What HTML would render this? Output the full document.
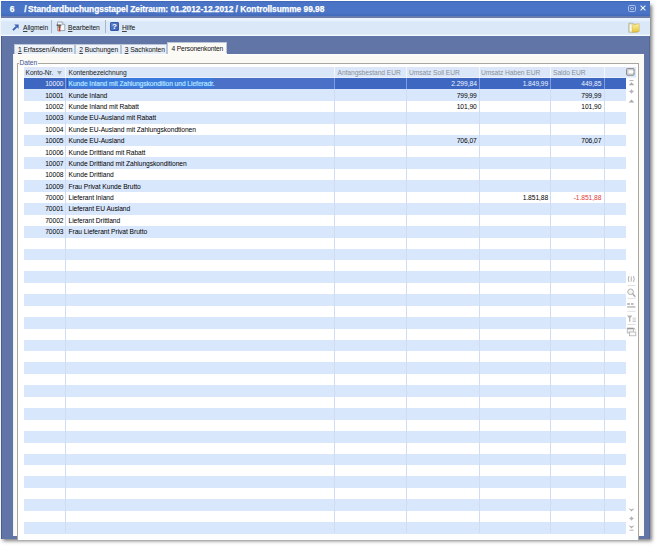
<!DOCTYPE html><html><head><meta charset="utf-8"><style>
*{margin:0;padding:0;box-sizing:border-box}
html,body{width:658px;height:548px;overflow:hidden;background:#fff}
body{position:relative;font-family:"Liberation Sans",sans-serif;font-size:6.7px;letter-spacing:-0.06px;color:#000}
.a{position:absolute}
.t{position:absolute;white-space:nowrap;line-height:6.9px}
.r{text-align:right}
u{text-decoration-thickness:0.6px;text-underline-offset:1px;text-decoration-color:#444}
</style></head><body><div class="a" style="left:1.3px;top:3px;width:648.4px;height:536.4px;background:#868686;box-shadow:2px 2px 3.5px 0px rgba(0,0,0,0.5)"></div><div class="a" style="left:1.2px;top:1.3px;width:648.5px;height:538px;background:#6275a7;border-left:0.8px solid #4d5d92;border-right:0.8px solid #56669a"></div><div class="a" style="left:1.3px;top:1.3px;width:648.4px;height:14.5px;background:linear-gradient(#4066b6,#4a74c6 12%,#4a74c6 80%,#4369b9)"></div><div class="t" style="left:9.8px;top:5.4px;line-height:8.4px;font-size:8.4px;letter-spacing:0;font-weight:bold;color:#fff;-webkit-text-stroke:0.25px #fff">6</div><div class="t" style="left:24.3px;top:5.4px;line-height:8.4px;font-size:8.4px;letter-spacing:-0.03px;font-weight:bold;color:#fff;-webkit-text-stroke:0.25px #fff">/<span style="margin-left:1.5px"></span>Standardbuchungsstapel Zeitraum: 01.2012-12.2012 / Kontrollsumme 99.98</div><div class="a" style="left:628.2px;top:5.3px;width:7.6px;height:6.8px;border:1.2px solid #aac0ea;border-radius:1.8px"></div><div class="a" style="left:630.3px;top:7.2px;width:3.4px;height:3px;border:0.9px solid #9fb5e2;border-radius:1px"></div><svg class="a" style="left:639.8px;top:5.2px" width="6" height="6" viewBox="0 0 6 6"><path d="M.6 .6L5.4 5.4M5.4 .6L.6 5.4" stroke="#f4f8ff" stroke-width="1.05"/></svg><div class="a" style="left:1.3px;top:15.5px;width:648.4px;height:2.1px;background:#6a7cab"></div><div class="a" style="left:1.3px;top:17.6px;width:648.4px;height:18.6px;background:linear-gradient(#eaf5ff 0,#e6f1fd 14%,#dae8f8 22%,#dae8f8 90%,#f4faff 95%,#f4faff 100%)"></div><svg class="a" style="left:11.8px;top:23.6px" width="7" height="7" viewBox="0 0 7 7"><path d="M1 6.2L4.6 2.6" stroke="#3a5fb2" stroke-width="1.9"/><path d="M2.2 .4H6.6V4.8Z" fill="#3a5fb2"/></svg><div class="t" style="left:23px;top:25.2px;color:#111"><u>A</u>llgmein</div><div class="a" style="left:51px;top:20px;width:1px;height:13px;background:#a9b5c8"></div><svg class="a" style="left:56px;top:21px" width="10" height="11" viewBox="0 0 10 11"><path d="M1.5 1H6.2L8.8 3.6V9.6H1.5Z" fill="#f6f8fb" stroke="#8d96a3" stroke-width=".8"/><path d="M6.2 1V3.6H8.8" fill="#c9d2de" stroke="#8d96a3" stroke-width=".6"/><path d="M.6 4.2H5.4" stroke="#4a4a4a" stroke-width="1.3"/><path d="M3.5 4.8V10.4" stroke="#c8431a" stroke-width="1.8"/><path d="M3.5 4.8V7" stroke="#7a5a4a" stroke-width="1.8"/></svg><div class="t" style="left:68px;top:25.2px;color:#111"><u>B</u>earbeiten</div><div class="a" style="left:104.5px;top:20px;width:1px;height:13px;background:#a9b5c8"></div><div class="a" style="left:110px;top:22.1px;width:8.9px;height:8.9px;background:linear-gradient(135deg,#5a7fd0,#3a5fb4);border:0.6px solid #3558a8;border-radius:1px;color:#fff;font-weight:bold;font-size:8px;letter-spacing:0;line-height:8.4px;text-align:center">?</div><div class="t" style="left:122px;top:25.2px;color:#111"><u>H</u>ilfe</div><svg class="a" style="left:628px;top:21.5px" width="12" height="11" viewBox="0 0 12 11"><defs><linearGradient id="fy" x1="0" y1="0" x2="0" y2="1"><stop offset="0" stop-color="#fbf2a0"/><stop offset="1" stop-color="#e6c43a"/></linearGradient></defs><path d="M.8 1.2H5L6 2.2H9.5V10.2H.8Z" fill="#e9e3c0" stroke="#a9a58e" stroke-width=".7"/><path d="M2.2 3H8V9.5H2.2Z" fill="#fffef5"/><path d="M4 3.2L11.2 1.6V9.4L4 10.4Z" fill="url(#fy)" stroke="#c9b04a" stroke-width=".5"/></svg><div class="a" style="left:14px;top:44px;width:61.3px;height:10.5px;background:linear-gradient(#f2f6fc,#e3ebf6);border:1px solid #b9c6d8;border-bottom:none"></div><div class="t" style="left:18px;top:47px;color:#111"><u>1</u> Erfassen/Ändern</div><div class="a" style="left:75.3px;top:44px;width:45.4px;height:10.5px;background:linear-gradient(#f2f6fc,#e3ebf6);border:1px solid #b9c6d8;border-bottom:none"></div><div class="t" style="left:79.3px;top:47px;color:#111"><u>2</u> Buchungen</div><div class="a" style="left:120.7px;top:44px;width:46.7px;height:10.5px;background:linear-gradient(#f2f6fc,#e3ebf6);border:1px solid #b9c6d8;border-bottom:none"></div><div class="t" style="left:124.7px;top:47px;color:#111"><u>3</u> Sachkonten</div><div class="a" style="left:167.4px;top:42.3px;width:60px;height:12.5px;background:#fbfaf5;border:1px solid #b9c6d8;border-bottom:none"></div><div class="t" style="left:171.6px;top:45.9px;letter-spacing:-0.17px;color:#111">4 Personenkonten</div><div class="a" style="left:13px;top:54.2px;width:631px;height:482.3px;background:#fbfaf5;border-left:1.6px solid #eef3fb;border-top:1px solid #ffffff"></div><div class="a" style="left:167.9px;top:53px;width:59px;height:2px;background:#fbfaf5"></div><div class="a" style="left:17.2px;top:63.3px;width:621.5px;height:476.3px;border:0.9px solid #a9a7a0;border-bottom:none;background:#fff"></div><div class="t" style="left:18.6px;top:59.2px;line-height:7px;padding:0 1px;background:#fbfaf5;color:#41579c">Daten</div><div class="a" style="left:24px;top:67px;width:611.6px;height:10.7px;background:linear-gradient(#dee6fa,#d9e8f8 55%,#dce7f8 88%,#f2f8ff 100%)"></div><div class="t" style="left:25.5px;top:69.6px;color:#222">Konto-Nr.</div><div class="t" style="left:68.5px;top:69.6px;color:#222">Kontenbezeichnung</div><div class="t" style="left:337.5px;top:69.6px;color:#8a8f98">Anfangsbestand EUR</div><div class="t" style="left:409px;top:69.6px;color:#8a8f98">Umsatz Soll EUR</div><div class="t" style="left:481px;top:69.6px;color:#8a8f98">Umsatz Haben EUR</div><div class="t" style="left:553px;top:69.6px;color:#8a8f98">Saldo EUR</div><svg class="a" style="left:57px;top:70.5px" width="5" height="4" viewBox="0 0 5 4"><path d="M0 0H5L2.5 4Z" fill="#9aa0a8"/></svg><div class="a" style="left:65.3px;top:67px;width:1px;height:10.7px;background:#f4f7fc"></div><div class="a" style="left:334px;top:67px;width:1px;height:10.7px;background:#f4f7fc"></div><div class="a" style="left:406.2px;top:67px;width:1px;height:10.7px;background:#f4f7fc"></div><div class="a" style="left:478.5px;top:67px;width:1px;height:10.7px;background:#f4f7fc"></div><div class="a" style="left:550.3px;top:67px;width:1px;height:10.7px;background:#f4f7fc"></div><div class="a" style="left:603.7px;top:67px;width:1px;height:10.7px;background:#f4f7fc"></div><div class="a" style="left:24px;top:77.7px;width:602px;height:11.39px;background:#3e67c2"></div><div class="a" style="left:24px;top:89.09px;width:602px;height:11.79px;background:#d9e7fc"></div><div class="a" style="left:24px;top:111.87px;width:602px;height:11.79px;background:#d9e7fc"></div><div class="a" style="left:24px;top:134.65px;width:602px;height:11.79px;background:#d9e7fc"></div><div class="a" style="left:24px;top:157.43px;width:602px;height:11.79px;background:#d9e7fc"></div><div class="a" style="left:24px;top:180.21px;width:602px;height:11.79px;background:#d9e7fc"></div><div class="a" style="left:24px;top:202.99px;width:602px;height:11.79px;background:#d9e7fc"></div><div class="a" style="left:24px;top:225.77px;width:602px;height:11.79px;background:#d9e7fc"></div><div class="a" style="left:24px;top:248.55px;width:602px;height:11.79px;background:#d9e7fc"></div><div class="a" style="left:24px;top:271.33px;width:602px;height:11.79px;background:#d9e7fc"></div><div class="a" style="left:24px;top:294.11px;width:602px;height:11.79px;background:#d9e7fc"></div><div class="a" style="left:24px;top:316.89px;width:602px;height:11.79px;background:#d9e7fc"></div><div class="a" style="left:24px;top:339.67px;width:602px;height:11.79px;background:#d9e7fc"></div><div class="a" style="left:24px;top:362.45px;width:602px;height:11.79px;background:#d9e7fc"></div><div class="a" style="left:24px;top:385.23px;width:602px;height:11.79px;background:#d9e7fc"></div><div class="a" style="left:24px;top:408.01px;width:602px;height:11.79px;background:#d9e7fc"></div><div class="a" style="left:24px;top:430.79px;width:602px;height:11.79px;background:#d9e7fc"></div><div class="a" style="left:24px;top:453.57px;width:602px;height:11.79px;background:#d9e7fc"></div><div class="a" style="left:24px;top:476.35px;width:602px;height:11.79px;background:#d9e7fc"></div><div class="a" style="left:24px;top:499.13px;width:602px;height:11.79px;background:#d9e7fc"></div><div class="a" style="left:24px;top:521.91px;width:602px;height:11.79px;background:#d9e7fc"></div><div class="a" style="left:65.3px;top:77.7px;width:0.7px;height:455.6px;background:#cfdcf1"></div><div class="a" style="left:334px;top:77.7px;width:0.7px;height:455.6px;background:#cfdcf1"></div><div class="a" style="left:406.2px;top:77.7px;width:0.7px;height:455.6px;background:#cfdcf1"></div><div class="a" style="left:478.5px;top:77.7px;width:0.7px;height:455.6px;background:#cfdcf1"></div><div class="a" style="left:550.3px;top:77.7px;width:0.7px;height:455.6px;background:#cfdcf1"></div><div class="a" style="left:603.7px;top:77.7px;width:0.7px;height:455.6px;background:#cfdcf1"></div><div class="a" style="left:66px;top:77.7px;width:268.1px;height:11.39px;background:#4a70c8"></div><div class="a" style="left:66.6px;top:78.0px;width:146.6px;height:10.49px;background:#3a7adc;border-left:0.8px solid #2c58b4"></div><div class="a" style="left:65.3px;top:77.7px;width:0.8px;height:11.39px;background:#7c9de0"></div><div class="a" style="left:334px;top:77.7px;width:0.8px;height:11.39px;background:#7c9de0"></div><div class="a" style="left:406.2px;top:77.7px;width:0.8px;height:11.39px;background:#7c9de0"></div><div class="a" style="left:478.5px;top:77.7px;width:0.8px;height:11.39px;background:#7c9de0"></div><div class="a" style="left:550.3px;top:77.7px;width:0.8px;height:11.39px;background:#7c9de0"></div><div class="a" style="left:603.7px;top:77.7px;width:0.8px;height:11.39px;background:#7c9de0"></div><div class="t r" style="left:24px;width:39.5px;top:81.2px;color:#eef4ff">10000</div><div class="t" style="left:68.5px;top:81.2px;color:#b8e2ff;-webkit-text-stroke:0.2px #b8e2ff">Kunde Inland mit Zahlungskondition und Lieferadr.</div><div class="t r" style="left:416.8px;width:60px;top:81.2px;color:#eef4ff">2.299,84</div><div class="t r" style="left:488.2px;width:60px;top:81.2px;color:#eef4ff">1.849,99</div><div class="t r" style="left:541.4px;width:60px;top:81.2px;color:#eef4ff">449,85</div><div class="t r" style="left:24px;width:39.5px;top:92.59px;color:#000">10001</div><div class="t" style="left:68.5px;top:92.59px;color:#000">Kunde Inland</div><div class="t r" style="left:416.8px;width:60px;top:92.59px;color:#000">799,99</div><div class="t r" style="left:541.4px;width:60px;top:92.59px;color:#000">799,99</div><div class="t r" style="left:24px;width:39.5px;top:103.98px;color:#000">10002</div><div class="t" style="left:68.5px;top:103.98px;color:#000">Kunde Inland mit Rabatt</div><div class="t r" style="left:416.8px;width:60px;top:103.98px;color:#000">101,90</div><div class="t r" style="left:541.4px;width:60px;top:103.98px;color:#000">101,90</div><div class="t r" style="left:24px;width:39.5px;top:115.37px;color:#000">10003</div><div class="t" style="left:68.5px;top:115.37px;color:#000">Kunde EU-Ausland mit Rabatt</div><div class="t r" style="left:24px;width:39.5px;top:126.76px;color:#000">10004</div><div class="t" style="left:68.5px;top:126.76px;color:#000">Kunde EU-Ausland mit Zahlungskondtionen</div><div class="t r" style="left:24px;width:39.5px;top:138.15px;color:#000">10005</div><div class="t" style="left:68.5px;top:138.15px;color:#000">Kunde EU-Ausland</div><div class="t r" style="left:416.8px;width:60px;top:138.15px;color:#000">706,07</div><div class="t r" style="left:541.4px;width:60px;top:138.15px;color:#000">706,07</div><div class="t r" style="left:24px;width:39.5px;top:149.54px;color:#000">10006</div><div class="t" style="left:68.5px;top:149.54px;color:#000">Kunde Drittland mit Rabatt</div><div class="t r" style="left:24px;width:39.5px;top:160.93px;color:#000">10007</div><div class="t" style="left:68.5px;top:160.93px;color:#000">Kunde Drittland mit Zahlungskonditionen</div><div class="t r" style="left:24px;width:39.5px;top:172.32px;color:#000">10008</div><div class="t" style="left:68.5px;top:172.32px;color:#000">Kunde Drittland</div><div class="t r" style="left:24px;width:39.5px;top:183.71px;color:#000">10009</div><div class="t" style="left:68.5px;top:183.71px;color:#000">Frau Privat Kunde Brutto</div><div class="t r" style="left:24px;width:39.5px;top:195.1px;color:#000">70000</div><div class="t" style="left:68.5px;top:195.1px;color:#000">Lieferant Inland</div><div class="t r" style="left:488.2px;width:60px;top:195.1px;color:#000">1.851,88</div><div class="t r" style="left:541.4px;width:60px;top:195.1px;color:#e0383a">-1.851,88</div><div class="t r" style="left:24px;width:39.5px;top:206.49px;color:#000">70001</div><div class="t" style="left:68.5px;top:206.49px;color:#000">Lieferant EU Ausland</div><div class="t r" style="left:24px;width:39.5px;top:217.88px;color:#000">70002</div><div class="t" style="left:68.5px;top:217.88px;color:#000">Lieferant Drittland</div><div class="t r" style="left:24px;width:39.5px;top:229.27px;color:#000">70003</div><div class="t" style="left:68.5px;top:229.27px;color:#000">Frau Lieferant Privat Brutto</div><svg class="a" style="left:626px;top:68px" width="9" height="8" viewBox="0 0 9 8"><rect x=".5" y=".5" width="7.6" height="6.8" rx="1" fill="#cfcfcf" stroke="#7d7d7d" stroke-width=".8"/><path d="M2.5 2.3H6.8Q8.6 3.9 6.8 5.5H2.5Z" fill="#fbfbfb"/></svg><svg class="a" style="left:627.5px;top:79.6px" width="7" height="6" viewBox="0 0 7 6"><path d="M1.5 .6H5.5" stroke="#a9a9a9" stroke-width=".9"/><path d="M.7 5.2L3.5 2.2L6.3 5.2Z" fill="#a9a9a9"/></svg><svg class="a" style="left:627.5px;top:89.3px" width="7" height="5" viewBox="0 0 7 5"><path d="M3.5 .3L4.7 1.8L6 2.5L4.7 3.2L3.5 4.7L2.3 3.2L1 2.5L2.3 1.8Z" fill="#b4b4b4"/></svg><svg class="a" style="left:627.5px;top:98.6px" width="7" height="4" viewBox="0 0 7 4"><path d="M.7 3.4L3.5 .4L6.3 3.4Z" fill="#a9a9a9"/></svg><svg class="a" style="left:627.8px;top:507.5px" width="7" height="4" viewBox="0 0 7 4"><path d="M.5 .3L3.5 1.5L6.5 .3L3.5 3.5Z" fill="#a9a9a9"/></svg><svg class="a" style="left:627.8px;top:515.5px" width="7" height="5" viewBox="0 0 7 5"><path d="M3.5 .3L4.7 1.8L6 2.5L4.7 3.2L3.5 4.7L2.3 3.2L1 2.5L2.3 1.8Z" fill="#b4b4b4"/></svg><svg class="a" style="left:627.8px;top:525px" width="7" height="6" viewBox="0 0 7 6"><path d="M.5 .3L3.5 1.5L6.5 .3L3.5 3.5Z" fill="#a9a9a9"/><path d="M1.5 5.2H5.5" stroke="#a9a9a9" stroke-width=".9"/></svg><svg class="a" style="left:626px;top:275px" width="11" height="62" viewBox="0 0 11 62"><path d="M3 1Q1.5 4 3 7M7.5 1Q9 4 7.5 7M5.25 1.5V6.5" stroke="#a8a8a8" fill="none" stroke-width=".9"/><path d="M1.5 10.5H9.5" stroke="#c9c9c9" stroke-width=".6"/><circle cx="4.6" cy="16.8" r="2.8" fill="#f4f4f4" stroke="#a8a8a8" stroke-width=".9"/><path d="M6.6 18.8L9.3 21.7" stroke="#a8a8a8" stroke-width="1.4"/><path d="M1.5 23.4H9.5" stroke="#c9c9c9" stroke-width=".6"/><path d="M1.2 28H4V30H1.2ZM5 28H7.6V30H5Z" fill="#bdbdbd"/><path d="M1.2 31H9.4V32.8H1.2Z" fill="#c4c4c4"/><path d="M1.5 36.3H9.5" stroke="#c9c9c9" stroke-width=".6"/><path d="M1 40.6H6.4L4.4 43V46.8H3V43Z" fill="#b4b4b4"/><path d="M6.5 43.2H10M6.5 45H10M6.5 46.6H10" stroke="#c0c0c0" stroke-width=".8"/><path d="M1.5 49.5H9.5" stroke="#c9c9c9" stroke-width=".6"/><rect x="1.2" y="53" width="6.4" height="5" fill="#f2f2f2" stroke="#a8a8a8" stroke-width=".7"/><path d="M1.2 53H7.6V54.2H1.2Z" fill="#999"/><rect x="3.6" y="57" width="6.2" height="3.8" fill="#fafafa" stroke="#a8a8a8" stroke-width=".7"/><path d="M8 53L9.5 55" stroke="#a8a8a8" stroke-width=".7"/></svg></body></html>
